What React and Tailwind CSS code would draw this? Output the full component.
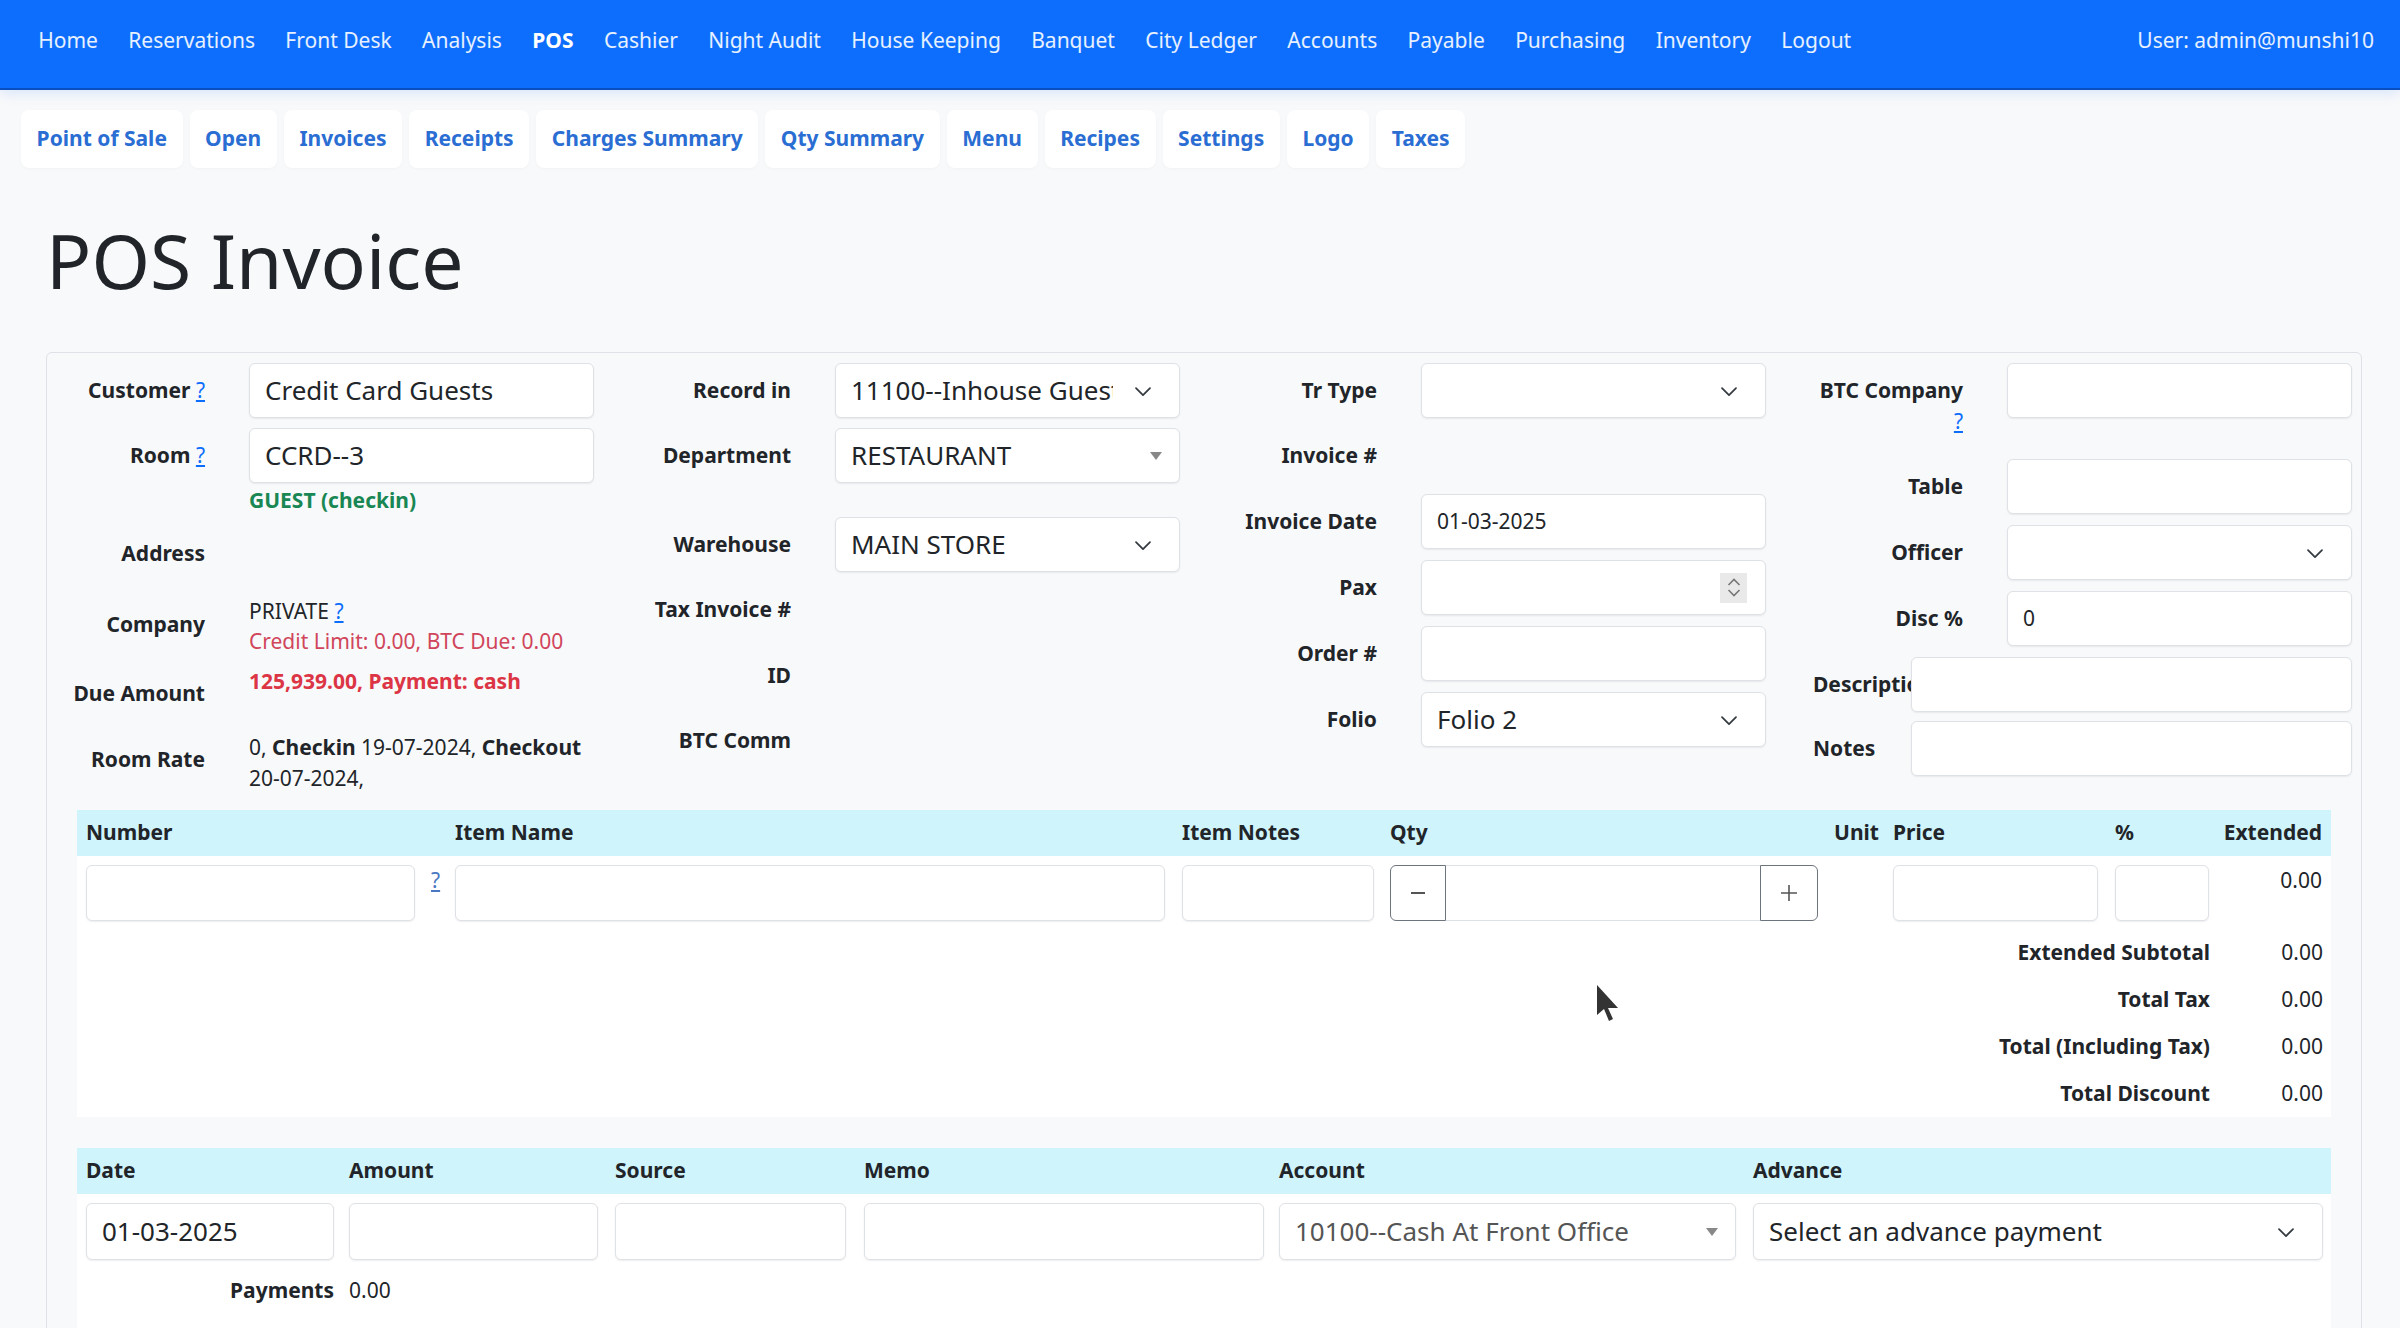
import React from "react";

const topLinks = [
  "Home",
  "Reservations",
  "Front Desk",
  "Analysis",
  "POS",
  "Cashier",
  "Night Audit",
  "House Keeping",
  "Banquet",
  "City Ledger",
  "Accounts",
  "Payable",
  "Purchasing",
  "Inventory",
  "Logout",
];

const tabs = [
  "Point of Sale",
  "Open",
  "Invoices",
  "Receipts",
  "Charges Summary",
  "Qty Summary",
  "Menu",
  "Recipes",
  "Settings",
  "Logo",
  "Taxes",
];

function Chevron() {
  return (
    <svg width="20" height="14" viewBox="0 0 16 12" className="shrink-0">
      <path d="M2 3.5l6 6 6-6" fill="none" stroke="#343a40" strokeWidth="1.5" strokeLinecap="round" strokeLinejoin="round" />
    </svg>
  );
}

function Caret() {
  return (
    <svg width="12" height="8" viewBox="0 0 12 8" className="shrink-0">
      <polygon points="0,0 12,0 6,8" fill="#888" />
    </svg>
  );
}

function Box({ children, className = "" }) {
  return (
    <div className={`h-[55px] bg-white border border-[#dee2e6] rounded-[6px] shadow-[0_1px_2px_rgba(0,0,0,0.07)] flex items-center px-[15px] ${className}`}>
      {children}
    </div>
  );
}

function Label({ children, className = "" }) {
  return (
    <div className={`w-[158px] shrink-0 text-right font-bold py-[12px] leading-[31px] ${className}`}>{children}</div>
  );
}

function Row({ label, children, className = "mb-[11px]" }) {
  return (
    <div className={`flex items-start ${className}`}>
      <Label>{label}</Label>
      <div className="ml-[44px] w-[345px]">{children}</div>
    </div>
  );
}

const Q = () => <span className="text-[#0d6efd] underline font-normal">?</span>;

export default function App() {
  return (
    <div className="min-h-screen bg-[#f8f9fa] font-['Noto_Sans',sans-serif] text-[21px] text-[#212529] relative overflow-hidden">
      {/* top navbar */}
      <nav className="h-[90px] bg-[#0d6efd] border-b-[2px] border-[#0a4fc0] shadow-[0_4px_12px_rgba(13,110,253,0.12)] flex items-center pl-[23px] pr-[26px] pb-[6px]">
        {topLinks.map((l) => (
          <span key={l} className={`px-[15.2px] whitespace-nowrap ${l === "POS" ? "font-bold text-white" : "text-white/90"}`}>
            {l}
          </span>
        ))}
        <span className="ml-auto text-white/90">User: admin@munshi10</span>
      </nav>

      {/* sub tabs */}
      <div className="flex gap-[7px] pl-[21px] pt-[20px]">
        {tabs.map((t) => (
          <div key={t} className="h-[58px] bg-white rounded-[8px] px-[15.6px] flex items-center font-bold text-[#2a6dd3] whitespace-nowrap shadow-[0_1px_3px_rgba(0,0,0,0.03)]">
            {t}
          </div>
        ))}
      </div>

      <h1 className="ml-[46px] mt-[48px] text-[75px] leading-[89px] font-normal">POS Invoice</h1>

      {/* invoice panel */}
      <div className="ml-[46px] mr-[38px] mt-[47px] border border-[#dee2e6] rounded-t-[6px] pb-[40px]">
        <div className="grid grid-cols-[586px_586px_586px_1fr] pt-[10px]">
          {/* column 1 */}
          <div>
            <Row label={<>Customer <Q /></>} className="mb-[10px]">
              <Box className="text-[26px]">Credit Card Guests</Box>
            </Row>
            <Row label={<>Room <Q /></>} className="mb-[10px]">
              <Box className="text-[26px]">CCRD--3</Box>
              <div className="mt-[2px] leading-[31px] font-bold text-[#198754]">GUEST (checkin)</div>
            </Row>
            <Row label="Address" className="mb-[15px]">
              <div className="h-[55px]" />
            </Row>
            <div className="flex items-start mb-[10px]">
              <Label className="pt-[13px]">Company</Label>
              <div className="ml-[44px] w-[345px] leading-[30px]">
                <div>
                  PRIVATE <Q />
                </div>
                <div className="text-[#d0455a]">Credit Limit: 0.00, BTC Due: 0.00</div>
              </div>
            </div>
            <div className="flex items-start mb-[11px]">
              <Label>Due Amount</Label>
              <div className="ml-[44px] w-[345px] leading-[30px] font-bold text-[#dc3545]">125,939.00, Payment: cash</div>
            </div>
            <div className="flex items-start">
              <Label>Room Rate</Label>
              <div className="ml-[44px] w-[345px] leading-[31px]">
                0, <b>Checkin</b> 19-07-2024, <b>Checkout</b> 20-07-2024,
              </div>
            </div>
          </div>

          {/* column 2 */}
          <div>
            <Row label="Record in" className="mb-[10px]">
              <Box className="text-[26px] justify-between pr-[26px]">
                <span className="overflow-hidden whitespace-nowrap w-[262px]">11100--Inhouse Guests</span>
                <Chevron />
              </Box>
            </Row>
            <Row label="Department" className="mb-[34px]">
              <Box className="text-[26px] justify-between pr-[17px]">
                <span>RESTAURANT</span>
                <Caret />
              </Box>
            </Row>
            <Row label="Warehouse" className="mb-[10px]">
              <Box className="text-[26px] justify-between pr-[26px]">
                <span>MAIN STORE</span>
                <Chevron />
              </Box>
            </Row>
            <Row label="Tax Invoice #" className="mb-[11px]">
              <div className="h-[55px]" />
            </Row>
            <Row label="ID" className="mb-[10px]">
              <div className="h-[55px]" />
            </Row>
            <Row label="BTC Comm" className="mb-0">
              <div className="h-[55px]" />
            </Row>
          </div>

          {/* column 3 */}
          <div>
            <Row label="Tr Type" className="mb-[10px]">
              <Box className="justify-end pr-[26px]">
                <Chevron />
              </Box>
            </Row>
            <Row label="Invoice #">
              <div className="h-[55px]" />
            </Row>
            <Row label="Invoice Date">
              <Box>01-03-2025</Box>
            </Row>
            <Row label="Pax">
              <Box className="justify-end pr-[18px]">
                <div className="w-[27px] h-[30px] bg-[#e9e9e9] flex flex-col items-center justify-center gap-[3px]">
                  <svg width="14" height="8" viewBox="0 0 14 8">
                    <path d="M1.5 7l5.5-5.5 5.5 5.5" fill="none" stroke="#777" strokeWidth="1.6" />
                  </svg>
                  <svg width="14" height="8" viewBox="0 0 14 8">
                    <path d="M1.5 1l5.5 5.5 5.5-5.5" fill="none" stroke="#777" strokeWidth="1.6" />
                  </svg>
                </div>
              </Box>
            </Row>
            <Row label="Order #">
              <Box />
            </Row>
            <Row label="Folio" className="mb-0">
              <Box className="text-[26px] justify-between pr-[26px]">
                <span>Folio 2</span>
                <Chevron />
              </Box>
            </Row>
          </div>

          {/* column 4 */}
          <div>
            <div className="flex items-start mb-[10px]">
              <Label>
                BTC Company
                <br />
                <Q />
              </Label>
              <div className="ml-[44px] w-[345px]">
                <Box />
              </div>
            </div>
            <Row label="Table">
              <Box />
            </Row>
            <Row label="Officer">
              <Box className="justify-end pr-[26px]">
                <Chevron />
              </Box>
            </Row>
            <Row label="Disc %">
              <Box>0</Box>
            </Row>
            <div className="flex items-start mb-[9px]">
              <div className="w-[106px] shrink-0 pl-[8px] font-bold py-[12px] leading-[31px] overflow-hidden whitespace-nowrap">Description</div>
              <div className="w-[441px]">
                <Box />
              </div>
            </div>
            <div className="flex items-start">
              <div className="w-[106px] shrink-0 pl-[8px] font-bold py-[12px] leading-[31px]">Notes</div>
              <div className="w-[441px]">
                <Box />
              </div>
            </div>
          </div>
        </div>

        {/* items table */}
        <div className="mx-[30px] mt-[16px] bg-white">
          <div className="flex h-[46px] items-center bg-[#cff4fc] font-bold">
            <div className="w-[369px] pl-[9px]">Number</div>
            <div className="w-[727px] pl-[9px]">Item Name</div>
            <div className="w-[208px] pl-[9px]">Item Notes</div>
            <div className="w-[444px] pl-[9px]">Qty</div>
            <div className="w-[59px] pl-[9px]">Unit</div>
            <div className="w-[222px] pl-[9px]">Price</div>
            <div className="w-[112px] pl-[9px]">%</div>
            <div className="w-[112px] pr-[8px] text-right">Extended</div>
          </div>
          <div className="flex items-start pt-[9px] pb-[8px]">
            <div className="w-[369px] pl-[9px] flex items-start">
              <Box className="w-[329px] h-[56px]" />
              <span className="ml-[16px] text-[#4a78c2] underline leading-[31px]">?</span>
            </div>
            <div className="w-[727px] pl-[9px]">
              <Box className="w-[710px] h-[56px]" />
            </div>
            <div className="w-[208px] pl-[9px]">
              <Box className="w-[192px] h-[56px]" />
            </div>
            <div className="w-[444px] pl-[9px] flex h-[56px]">
              <div className="w-[56px] border border-[#6c757d] rounded-l-[6px] flex items-center justify-center">
                <svg width="18" height="18" viewBox="0 0 18 18">
                  <path d="M2 9h14" stroke="#555" strokeWidth="2" />
                </svg>
              </div>
              <div className="w-[314px] bg-white border-y border-[#dee2e6]" />
              <div className="w-[58px] border border-[#6c757d] rounded-r-[6px] flex items-center justify-center">
                <svg width="20" height="20" viewBox="0 0 20 20">
                  <path d="M2 10h16M10 2v16" stroke="#555" strokeWidth="1.6" />
                </svg>
              </div>
            </div>
            <div className="w-[59px]" />
            <div className="w-[222px] pl-[9px]">
              <Box className="w-[205px] h-[56px]" />
            </div>
            <div className="w-[112px] pl-[9px]">
              <Box className="w-[94px] h-[56px]" />
            </div>
            <div className="w-[112px] pr-[8px] text-right leading-[31px]">0.00</div>
          </div>
          {[
            ["Extended Subtotal", "0.00"],
            ["Total Tax", "0.00"],
            ["Total (Including Tax)", "0.00"],
            ["Total Discount", "0.00"],
          ].map(([k, v]) => (
            <div key={k} className="flex justify-end leading-[31px] py-[8px]">
              <div className="pr-[9px] font-bold text-right">{k}</div>
              <div className="w-[112px] pr-[8px] text-right">{v}</div>
            </div>
          ))}
        </div>

        {/* payments table */}
        <div className="mx-[30px] mt-[31px] bg-white pb-[60px]">
          <div className="flex h-[46px] items-center bg-[#cff4fc] font-bold">
            <div className="w-[263px] pl-[9px]">Date</div>
            <div className="w-[266px] pl-[9px]">Amount</div>
            <div className="w-[249px] pl-[9px]">Source</div>
            <div className="w-[415px] pl-[9px]">Memo</div>
            <div className="w-[474px] pl-[9px]">Account</div>
            <div className="w-[586px] pl-[9px]">Advance</div>
          </div>
          <div className="flex items-start pt-[9px]">
            <div className="w-[263px] pl-[9px]">
              <Box className="w-[248px] h-[57px] text-[26px]">01-03-2025</Box>
            </div>
            <div className="w-[266px] pl-[9px]">
              <Box className="w-[249px] h-[57px]" />
            </div>
            <div className="w-[249px] pl-[9px]">
              <Box className="w-[231px] h-[57px]" />
            </div>
            <div className="w-[415px] pl-[9px]">
              <Box className="w-[400px] h-[57px]" />
            </div>
            <div className="w-[474px] pl-[9px]">
              <Box className="w-[457px] h-[57px] text-[26px] text-[#555] justify-between pr-[17px]">
                <span>10100--Cash At Front Office</span>
                <Caret />
              </Box>
            </div>
            <div className="w-[586px] pl-[9px]">
              <Box className="w-[570px] h-[57px] text-[26px] justify-between pr-[26px]">
                <span>Select an advance payment</span>
                <Chevron />
              </Box>
            </div>
          </div>
          <div className="flex leading-[31px] mt-[15px]">
            <div className="w-[263px] pr-[6px] text-right font-bold">Payments</div>
            <div className="pl-[9px]">0.00</div>
          </div>
        </div>
      </div>

      {/* mouse pointer */}
      <svg className="absolute left-[1597px] top-[985px]" width="22" height="38" viewBox="0 0 22 38">
        <polygon points="0,0 0,30 7,24 12,36 16,34 11,23 21,23" fill="#333" />
      </svg>
    </div>
  );
}
